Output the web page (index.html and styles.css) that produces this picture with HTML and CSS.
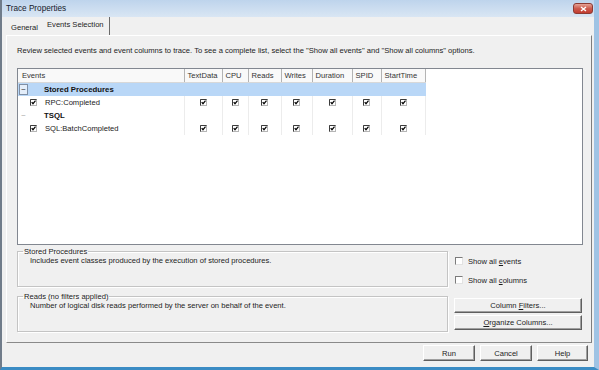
FILE: index.html
```html
<!DOCTYPE html>
<html lang="en">
<head>
  <meta charset="UTF-8">
  <title>Trace Properties</title>
  <link rel="stylesheet" href="styles.css">
</head>
<body>
  <svg class="defs" width="0" height="0">
    <symbol id="tick" viewBox="0 0 7 7">
      <rect x="0.5" y="0.5" width="6" height="6" fill="#fff" stroke="#b5b5b5"/>
      <path d="M0.5 6.5V0.5h6" stroke="#3c3c3c" fill="none"/>
      <path d="M1.7 3.1l1.3 1.6 2.5-3.1" stroke="#000" stroke-width="1.2" fill="none"/>
    </symbol>
  </svg>

  <div class="window">
    <div class="titlebar">
      <span class="title">Trace Properties</span>
      <span class="close">
        <svg width="7" height="6" viewBox="0 0 7 6"><path d="M1 1l5 4M6 1L1 5" stroke="#fff" stroke-width="1.4"/></svg>
      </span>
    </div>

    <div class="client">
      <div class="tabs">
        <span class="tab">General</span>
        <span class="tab active">Events Selection</span>
      </div>

      <div class="panel">
        <p class="intro">Review selected events and event columns to trace. To see a complete list, select the "Show all events" and "Show all columns" options.</p>

        <div class="grid">
          <table>
            <colgroup>
              <col class="c-events"><col class="c-text"><col class="c-cpu"><col class="c-reads">
              <col class="c-writes"><col class="c-dur"><col class="c-spid"><col class="c-start">
            </colgroup>
            <tr class="head">
              <th>Events</th><th>TextData</th><th>CPU</th><th>Reads</th>
              <th>Writes</th><th>Duration</th><th>SPID</th><th>StartTime</th>
            </tr>
            <tr class="cat selected">
              <td><div class="ev"><span class="exp">&minus;</span><span class="slot"></span><b>Stored Procedures</b></div></td>
              <td></td><td></td><td></td><td></td><td></td><td></td><td></td>
            </tr>
            <tr>
              <td><div class="ev"><svg class="ck"><use href="#tick"/></svg><span>RPC:Completed</span></div></td>
              <td><svg class="ck"><use href="#tick"/></svg></td>
              <td><svg class="ck"><use href="#tick"/></svg></td>
              <td><svg class="ck"><use href="#tick"/></svg></td>
              <td><svg class="ck"><use href="#tick"/></svg></td>
              <td><svg class="ck"><use href="#tick"/></svg></td>
              <td><svg class="ck"><use href="#tick"/></svg></td>
              <td><svg class="ck"><use href="#tick"/></svg></td>
            </tr>
            <tr class="cat">
              <td><div class="ev"><span class="exp faint">&minus;</span><span class="slot"></span><b>TSQL</b></div></td>
              <td></td><td></td><td></td><td></td><td></td><td></td><td></td>
            </tr>
            <tr>
              <td><div class="ev"><svg class="ck"><use href="#tick"/></svg><span>SQL:BatchCompleted</span></div></td>
              <td><svg class="ck"><use href="#tick"/></svg></td>
              <td><svg class="ck"><use href="#tick"/></svg></td>
              <td><svg class="ck"><use href="#tick"/></svg></td>
              <td><svg class="ck"><use href="#tick"/></svg></td>
              <td><svg class="ck"><use href="#tick"/></svg></td>
              <td><svg class="ck"><use href="#tick"/></svg></td>
              <td><svg class="ck"><use href="#tick"/></svg></td>
            </tr>
          </table>
        </div>

        <div class="lower">
          <div class="groups">
            <fieldset class="group">
              <legend>Stored Procedures</legend>
              <p>Includes event classes produced by the execution of stored procedures.</p>
            </fieldset>
            <fieldset class="group">
              <legend>Reads (no filters applied)</legend>
              <p>Number of logical disk reads performed by the server on behalf of the event.</p>
            </fieldset>
          </div>

          <div class="side">
            <label class="opt"><span class="box"></span><span>Show all <u>e</u>vents</span></label>
            <label class="opt"><span class="box"></span><span>Show all <u>c</u>olumns</span></label>
            <div class="side-buttons">
              <button type="button">Column <u>F</u>ilters...</button>
              <button type="button"><u>O</u>rganize Columns...</button>
            </div>
          </div>
        </div>
      </div>

      <div class="actions">
        <button type="button">Run</button>
        <button type="button">Cancel</button>
        <button type="button" class="narrow">Help</button>
      </div>
    </div>
  </div>
</body>
</html>
```

FILE: styles.css
```css
body {
  margin: 0;
  font-family: "Liberation Sans", Arial, sans-serif;
  font-size: 7.6px;
  color: #1c1c1c;
  background: #f0f0f0;
}

.defs {
  display: block;
  width: 0;
  height: 0;
  overflow: hidden;
}

.window {
  width: 599px;
  height: 370px;
  box-sizing: border-box;
  display: flex;
  flex-direction: column;
  border-left: 2px solid #707c8a;
  border-right: 5px solid #9fc3e4;
  border-bottom: 3px solid #3b8cc4;
  background: #f0f0f0;
}

/* title bar */
.titlebar {
  height: 17px;
  flex: none;
  display: flex;
  align-items: center;
  justify-content: space-between;
  padding: 0 1px 0 4px;
  background: linear-gradient(#bed4ec, #d9e6f4);
}

.title {
  font-size: 8.2px;
  color: #15202c;
}

.close {
  width: 20px;
  height: 11px;
  box-sizing: border-box;
  display: flex;
  align-items: center;
  justify-content: center;
  border: 1px solid #8c3a33;
  border-radius: 3px;
  background: linear-gradient(#e6a396, #cc5b4e 50%, #c23c30);
}

/* client area */
.client {
  flex: 1;
  display: flex;
  flex-direction: column;
  padding: 0 2px 0 4px;
}

.tabs {
  height: 18px;
  flex: none;
  display: flex;
  align-items: flex-end;
}

.tab {
  height: 15px;
  line-height: 15px;
  padding: 0 4px 0 5px;
}

.tab.active {
  height: 18px;
  line-height: 16px;
  padding: 0 5px;
  border-right: 1px solid #6a6a6a;
}

.panel {
  height: 308px;
  flex: none;
  box-sizing: border-box;
  border: 1px solid;
  border-color: #fff #7d7d7d #8a8a8a #fff;
  padding: 0 8px 0 10px;
}

.intro {
  margin: 10px 0 12px;
  line-height: 10px;
  height: 10px;
}

/* events grid */
.grid {
  height: 177px;
  box-sizing: border-box;
  border: 1px solid #828790;
  background: #fff;
}

table {
  border-collapse: collapse;
  table-layout: fixed;
  width: 407px;
}

.c-events { width: 166px; }
.c-text { width: 38px; }
.c-cpu { width: 26px; }
.c-reads { width: 33px; }
.c-writes { width: 31px; }
.c-dur { width: 40px; }
.c-spid { width: 29px; }
.c-start { width: 44px; }

th {
  height: 13px;
  padding: 0 0 0 3px;
  text-align: left;
  font-weight: normal;
  color: #333;
  background: #f9f9f9;
  border-right: 1px solid #b4b4b4;
  border-bottom: 1px solid #d8d8d8;
}

th:first-child {
  padding-left: 4px;
}

td {
  height: 13px;
  padding: 0;
  text-align: center;
  color: #222;
  border-right: 1px solid #ececec;
}

tr.selected td {
  background: #b9d7f7;
  border-right-color: #b9d7f7;
}

.ck {
  display: block;
  width: 7px;
  height: 7px;
  margin: 0 auto;
}

.ev {
  display: flex;
  align-items: center;
  height: 13px;
}

.ev .ck {
  margin: 0 8px 0 12px;
}

.exp {
  width: 9px;
  height: 11px;
  box-sizing: border-box;
  margin-left: 1px;
  border: 1px solid #7f8fa5;
  background: #e4eefa;
  line-height: 9px;
  font-size: 8px;
  text-align: center;
  color: #333;
}

.exp.faint {
  border-color: #fff;
  background: #fff;
  color: #aaa;
}

.slot {
  width: 16px;
}

.ev b {
  font-size: 7.8px;
  color: #111;
}

/* lower area */
.lower {
  display: flex;
  gap: 6px;
  margin-top: 2px;
}

.groups {
  width: 431px;
  display: flex;
  flex-direction: column;
  gap: 5px;
}

.group {
  margin: 0;
  height: 40px;
  box-sizing: border-box;
  padding: 0 0 0 12px;
  border: 1px solid #c4c4c4;
  box-shadow: inset 1px 1px #fff, 1px 1px #fff;
}

.group legend {
  margin-left: -7px;
  padding: 0 1px;
  line-height: 9px;
  color: #222;
}

.group p {
  margin: 0;
  line-height: 10px;
}

.side {
  width: 128px;
  display: flex;
  flex-direction: column;
  padding-top: 9px;
}

.opt {
  height: 10px;
  display: flex;
  align-items: center;
  gap: 5px;
  margin-bottom: 9px;
}

.box {
  width: 8px;
  height: 8px;
  margin-left: 1px;
  box-sizing: border-box;
  border: 1px solid;
  border-color: #7b7b7b #e2e2e2 #e2e2e2 #7b7b7b;
  background: #fff;
}

.side-buttons {
  margin-top: 4px;
  display: flex;
  flex-direction: column;
  gap: 2px;
}

button {
  height: 15px;
  padding: 0;
  font-family: inherit;
  font-size: 7.6px;
  color: #1c1c1c;
  background: #f0f0f0;
  border: 1px solid;
  border-color: #fff #5f5f5f #5f5f5f #fff;
  box-shadow: inset -1px -1px #a0a0a0;
}

.actions {
  display: flex;
  justify-content: flex-end;
  gap: 5px;
  margin-top: 2px;
  padding-right: 4px;
}

.actions button {
  width: 52px;
  height: 16px;
}

.actions .narrow {
  width: 51px;
}
```
